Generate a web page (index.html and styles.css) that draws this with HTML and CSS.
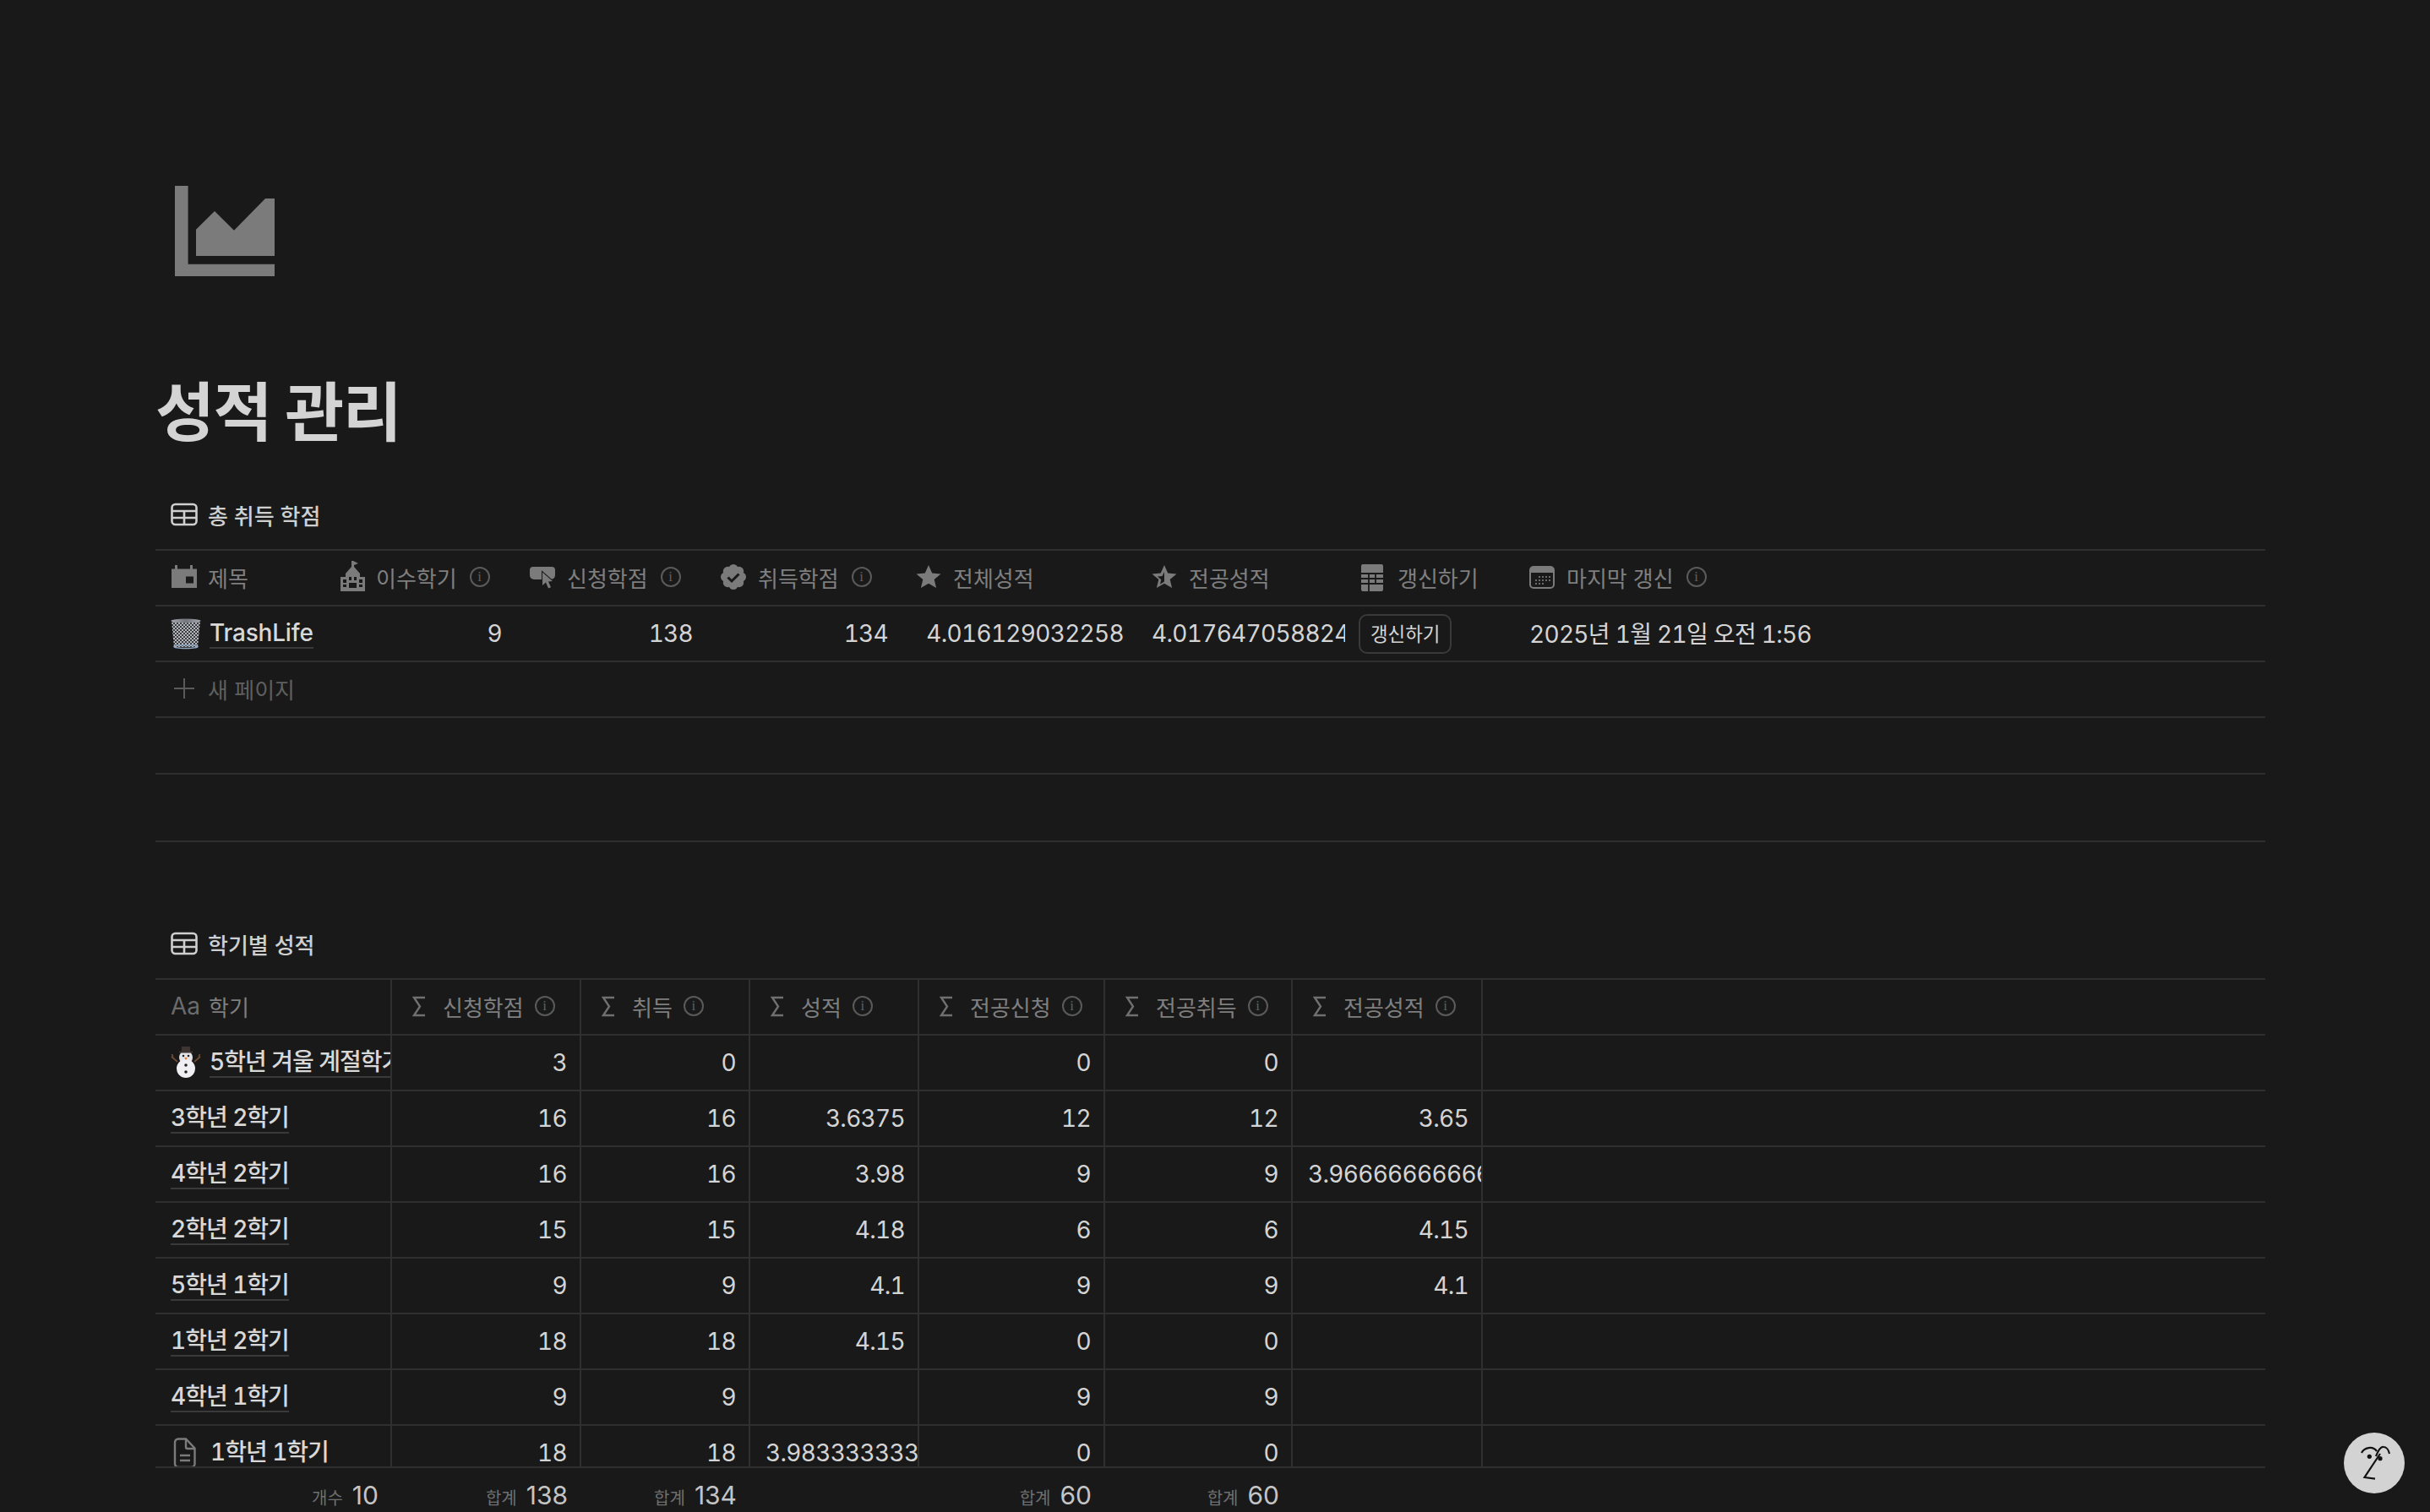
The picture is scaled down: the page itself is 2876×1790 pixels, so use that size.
FILE: index.html
```html
<!DOCTYPE html>
<html lang="ko">
	<head>
		<meta charset="utf-8" />
		<title>성적 관리</title>
		<link rel="stylesheet" href="styles.css">
	</head>
	<body>
		<div id="page">
			<svg class="page-icon" viewBox="0 0 118 107"><path d="M0 0h15.600v92.700H118V107H0z" fill="#7b7b7b"/><path d="M25 51.700 47 30 70 52.700 107 15h11v68H25z" fill="#7b7b7b"/></svg>
			<h1 class="page-title">성적 관리</h1>

			<div class="db-title">
				<svg class="db-icon" viewBox="0 0 32 32"><rect x="1.500" y="4" width="29" height="24" rx="4" fill="none" stroke="currentColor" stroke-width="2.600"/><path d="M1.500 12h29M1.500 20h29M16 12v16" fill="none" stroke="currentColor" stroke-width="2.600"/></svg>
				<span>총 취득 학점</span>
			</div>
			<div class="table summary">
				<div class="row head">
					<div class="cell"><svg class="ico" viewBox="0 0 30 30"><path d="M1 5.500h4V1h3v4.500h15V1h3v4.500h5V28H1zM18 14.500v8h9v-8z" fill="#7b7b7b" fill-rule="evenodd"/></svg><span>제목</span></div>
					<div class="cell"><svg class="ico" viewBox="0 0 30 30"><path d="M15 -4h2l6 3-5 2v2l7 8v4h6v17H2V15h6v-4l7-8zM5 18v4h4v-4zM5 24v3h4v-3zM24 18v4h4v-4zM24 24v3h4v-3zM12 15v4h3v-4zM18 15v4h3v-4zM12 22v6h9v-6z" fill="#7b7b7b" fill-rule="evenodd"/></svg><span>이수학기</span><i class="info">i</i></div>
					<div class="cell"><svg class="ico" viewBox="0 0 30 30"><path d="M4 3h22a4 4 0 0 1 4 4v6a5 5 0 0 1-5 5H5a5 5 0 0 1-5-5V7a4 4 0 0 1 4-4z" fill="#7b7b7b"/><path d="M15 9.500V25l4-3.500 3 7 3-1.200-3-6.800 5-.5z" fill="#7b7b7b" stroke="#191919" stroke-width="2" paint-order="stroke"/></svg><span>신청학점</span><i class="info">i</i></div>
					<div class="cell"><svg class="ico" viewBox="0 0 30 30"><g fill="#7b7b7b"><circle cx="15" cy="15" r="11"/><circle cx="15" cy="5.500" r="5.500"/><circle cx="15" cy="24.500" r="5.500"/><circle cx="5.500" cy="15" r="5.500"/><circle cx="24.500" cy="15" r="5.500"/><circle cx="8.300" cy="8.300" r="5.500"/><circle cx="21.700" cy="8.300" r="5.500"/><circle cx="8.300" cy="21.700" r="5.500"/><circle cx="21.700" cy="21.700" r="5.500"/></g><path d="M8.500 15.500l4.500 4.500 8.500-8.500" fill="none" stroke="#191919" stroke-width="3"/></svg><span>취득학점</span><i class="info">i</i></div>
					<div class="cell"><svg class="ico" viewBox="0 0 30 30"><path d="M15 1l4.200 9.500 10.300.9-7.800 6.700 2.400 10L15 22.700l-9.100 5.400 2.400-10L.5 11.400l10.300-.9z" fill="#7b7b7b"/></svg><span>전체성적</span></div>
					<div class="cell"><svg class="ico" viewBox="0 0 30 30"><path d="M15 1l4.200 9.500 10.300.9-7.800 6.700 2.400 10L15 22.700l-9.100 5.400 2.400-10L.5 11.400l10.300-.9zM15 9l-2.400 5-5.600.5 4.300 3.700-1.300 5.500L15 20.500z" fill="#7b7b7b" fill-rule="evenodd"/></svg><span>전공성적</span></div>
					<div class="cell"><svg class="ico" viewBox="0 0 30 30"><path d="M3 0h22a2 2 0 0 1 2 2v28a2 2 0 0 1-2 2H3a2 2 0 0 1-2-2V2a2 2 0 0 1 2-2z" fill="#7b7b7b"/><path d="M1 11h26M1 17h26M1 23h26M10 11v21M18 11v12" stroke="#191919" stroke-width="1.800"/></svg><span>갱신하기</span></div>
					<div class="cell"><svg class="ico" viewBox="0 0 30 30"><rect x="1" y="3" width="28" height="25" rx="4" fill="none" stroke="#7b7b7b" stroke-width="2"/><path d="M5 3h20a4 4 0 0 1 4 4v3H1V7a4 4 0 0 1 4-4z" fill="#7b7b7b"/><path d="M11 14h2v2h-2zM15 14h2v2h-2zM19 14h2v2h-2zM23 14h2v2h-2zM7 18h2v2H7zM11 18h2v2h-2zM15 18h2v2h-2zM19 18h2v2h-2zM23 18h2v2h-2zM7 22h2v2H7zM11 22h2v2h-2zM15 22h2v2h-2z" fill="#6a6a6a"/></svg><span>마지막 갱신</span><i class="info">i</i></div>
				</div>
				<div class="row">
					<div class="cell name">
						<svg class="emoji" viewBox="0 0 36 36"><defs><linearGradient id="bin" x1="0" x2="1" y1="0" y2="0"><stop offset="0" stop-color="#a4a9b0"/><stop offset=".5" stop-color="#74777d"/><stop offset="1" stop-color="#a4a9b0"/></linearGradient><pattern id="mesh" width="4" height="4" patternUnits="userSpaceOnUse"><path d="M0 0l4 4M4 0L0 4" stroke="#b4b7bb" stroke-width="1"/></pattern></defs><path d="M1 3h34l-3 31H4z" fill="#3a3c40"/><path d="M1 3h34l-3 31H4z" fill="url(#mesh)"/><ellipse cx="18" cy="3" rx="17.500" ry="2.500" fill="url(#bin)"/><ellipse cx="18" cy="33.500" rx="14" ry="2" fill="none" stroke="#8fa6c0" stroke-width="1.500"/></svg>
						<a class="link latin">TrashLife</a>
					</div>
					<div class="cell num">9</div>
					<div class="cell num">138</div>
					<div class="cell num">134</div>
					<div class="cell num">4.016129032258</div>
					<div class="cell clip">4.01764705882403</div>
					<div class="cell"><span class="btn">갱신하기</span></div>
					<div class="cell plain">2025년 1월 21일 오전 1:56</div>
				</div>
				<div class="row new">
					<div class="new-page"><svg class="plus" viewBox="0 0 24 24"><path d="M12 0v24M0 12h24" stroke="#5a5a5a" stroke-width="2"/></svg><span>새 페이지</span></div>
				</div>
				<div class="row calc"></div>
				<div class="row tail"></div>
			</div>

			<div class="db-title">
				<svg class="db-icon" viewBox="0 0 32 32"><rect x="1.500" y="4" width="29" height="24" rx="4" fill="none" stroke="currentColor" stroke-width="2.600"/><path d="M1.500 12h29M1.500 20h29M16 12v16" fill="none" stroke="currentColor" stroke-width="2.600"/></svg>
				<span>학기별 성적</span>
			</div>
			<div class="table terms">
				<div class="rows">
					<div class="row head">
						<div class="cell"><span class="aa">Aa</span><span>학기</span></div>
						<div class="cell"><svg class="sum" viewBox="0 0 16 25"><path d="M15 2H2l7 10.500L2 23h13" fill="none" stroke="#707070" stroke-width="2.400"/></svg><span>신청학점</span><i class="info">i</i></div>
						<div class="cell"><svg class="sum" viewBox="0 0 16 25"><path d="M15 2H2l7 10.500L2 23h13" fill="none" stroke="#707070" stroke-width="2.400"/></svg><span>취득</span><i class="info">i</i></div>
						<div class="cell"><svg class="sum" viewBox="0 0 16 25"><path d="M15 2H2l7 10.500L2 23h13" fill="none" stroke="#707070" stroke-width="2.400"/></svg><span>성적</span><i class="info">i</i></div>
						<div class="cell"><svg class="sum" viewBox="0 0 16 25"><path d="M15 2H2l7 10.500L2 23h13" fill="none" stroke="#707070" stroke-width="2.400"/></svg><span>전공신청</span><i class="info">i</i></div>
						<div class="cell"><svg class="sum" viewBox="0 0 16 25"><path d="M15 2H2l7 10.500L2 23h13" fill="none" stroke="#707070" stroke-width="2.400"/></svg><span>전공취득</span><i class="info">i</i></div>
						<div class="cell"><svg class="sum" viewBox="0 0 16 25"><path d="M15 2H2l7 10.500L2 23h13" fill="none" stroke="#707070" stroke-width="2.400"/></svg><span>전공성적</span><i class="info">i</i></div>
					</div>
					<div class="row">
						<div class="cell name">
							<svg class="emoji" viewBox="0 0 36 36"><path d="M8 17 1 11M28 17l7-6M3 13 1.500 8M33 13l1.500-5" stroke="#6e4a35" stroke-width="1.800"/><circle cx="18" cy="12" r="8" fill="#e4e4e8"/><circle cx="18" cy="25" r="11" fill="#f0f0f4"/><path d="M13 -1h10v6H13z" fill="#3f3634"/><path d="M10 5.500h16" stroke="#3f3634" stroke-width="2"/><circle cx="15" cy="10" r="1.300" fill="#222"/><circle cx="21" cy="10" r="1.300" fill="#222"/><path d="M16.300 12h3.400l-1.700 3z" fill="#e07020"/><circle cx="18" cy="21" r="1.800" fill="#222"/><circle cx="18" cy="29" r="1.800" fill="#222"/></svg>
							<a class="link">5학년 겨울 계절학기</a>
						</div>
						<div class="cell num">3</div><div class="cell num">0</div><div class="cell num"></div><div class="cell num">0</div><div class="cell num">0</div><div class="cell num"></div>
					</div>
					<div class="row">
						<div class="cell name"><a class="link">3학년 2학기</a></div>
						<div class="cell num">16</div><div class="cell num">16</div><div class="cell num">3.6375</div><div class="cell num">12</div><div class="cell num">12</div><div class="cell num">3.65</div>
					</div>
					<div class="row">
						<div class="cell name"><a class="link">4학년 2학기</a></div>
						<div class="cell num">16</div><div class="cell num">16</div><div class="cell num">3.98</div><div class="cell num">9</div><div class="cell num">9</div><div class="cell clip">3.96666666666667</div>
					</div>
					<div class="row">
						<div class="cell name"><a class="link">2학년 2학기</a></div>
						<div class="cell num">15</div><div class="cell num">15</div><div class="cell num">4.18</div><div class="cell num">6</div><div class="cell num">6</div><div class="cell num">4.15</div>
					</div>
					<div class="row">
						<div class="cell name"><a class="link">5학년 1학기</a></div>
						<div class="cell num">9</div><div class="cell num">9</div><div class="cell num">4.1</div><div class="cell num">9</div><div class="cell num">9</div><div class="cell num">4.1</div>
					</div>
					<div class="row">
						<div class="cell name"><a class="link">1학년 2학기</a></div>
						<div class="cell num">18</div><div class="cell num">18</div><div class="cell num">4.15</div><div class="cell num">0</div><div class="cell num">0</div><div class="cell num"></div>
					</div>
					<div class="row">
						<div class="cell name"><a class="link">4학년 1학기</a></div>
						<div class="cell num">9</div><div class="cell num">9</div><div class="cell num"></div><div class="cell num">9</div><div class="cell num">9</div><div class="cell num"></div>
					</div>
					<div class="row">
						<div class="cell name">
							<svg class="doc" viewBox="0 0 26 36"><path d="M5 1.500h9l10.500 11V31a4 4 0 0 1-4 4H5a4 4 0 0 1-4-4V5.500a4 4 0 0 1 4-4z" fill="none" stroke="#7b7b7b" stroke-width="2.400"/><path d="M14 2v9a2 2 0 0 0 2 2h8M7 21h12M7 27h12" fill="none" stroke="#7b7b7b" stroke-width="2.400"/></svg>
							<a class="link">1학년 1학기</a>
						</div>
						<div class="cell num">18</div><div class="cell num">18</div><div class="cell clip">3.98333333333333</div><div class="cell num">0</div><div class="cell num">0</div><div class="cell num"></div>
					</div>
				</div>
				<div class="footer">
					<div class="total"><small>개수</small>10</div>
					<div class="total"><small>합계</small>138</div>
					<div class="total"><small>합계</small>134</div>
					<div class="total"></div>
					<div class="total"><small>합계</small>60</div>
					<div class="total"><small>합계</small>60</div>
				</div>
			</div>
		</div>
		<div class="helper">
			<svg viewBox="0 0 72 72"><circle cx="36" cy="36" r="36" fill="#d3d3d3"/><path d="M21 24c3-6 13-9 18-2M38 28c2-5 5-12 9-11 3 0 6 3 7 8M43 25 24.500 53 37 54.700" fill="none" stroke="#111" stroke-width="2.200"/><circle cx="30.300" cy="28.300" r="2.600" fill="#111"/><circle cx="43" cy="30.700" r="2.600" fill="#111"/></svg>
		</div>
	</body>
</html>
```

FILE: styles.css
```css
* { box-sizing: border-box; }
html, body {
	margin: 0; padding: 0;
	height: 1790px;
	overflow: hidden;
	background-color: #191919;
}
body {
	color: #d4d4d4;
	font: 28px Inter, "Noto Sans CJK KR", sans-serif;
}
#page {
	width: 2681px;
	padding: 220px 0 0 184px;
}
svg { display: block; flex: none; overflow: visible; }
.page-icon {
	width: 118px; height: 107px;
	margin-left: 23px;
}
.page-title {
	margin: 113px 0 0 0;
	height: 96px;
	color: #d4d4d4;
	font-size: 76px; font-weight: 700; line-height: 96px;
	letter-spacing: -1.500px;
}
.db-title {
	display: flex; align-items: center; gap: 12px;
	height: 40px;
	margin-top: 54px; padding: 0 0 2px 18px;
	font-size: 26px; font-weight: 500;
	color: #cfcfcf;
}
.table + .db-title { margin-top: 101px; }
.db-icon { width: 32px; height: 32px; }

.table { border-top: 2px solid #2f2f2f; margin-top: 20px; }
.row {
	display: grid;
	height: 66px;
	border-bottom: 2px solid #2f2f2f;
}
.summary .row { grid-template-columns: 199px 226px 226px 231px 279px 247px 200px 1fr; }
.summary .row.new, .summary .row.calc { display: flex; }
.summary .row.calc { height: 67px; }
.summary .row.tail { height: 80px; }
.terms .rows { height: 578px; overflow: hidden; border-bottom: 2px solid #2f2f2f; }
.terms .row, .footer { grid-template-columns: 280px 224px 200px 200px 220px 222px 225px 1fr; }
.terms .cell { border-right: 2px solid #2f2f2f; }
.cell {
	display: flex; align-items: center;
	min-width: 0;
	padding: 0 15px 0 18px;
	overflow: hidden;
	white-space: nowrap;
	font-variant-numeric: tabular-nums;
	letter-spacing: -.7px;
}
.head .cell {
	gap: 14px;
	padding-bottom: 2px;
	color: #7f7f7f;
	font-size: 26px;
	letter-spacing: 0;
}
.terms .head .cell:nth-child(n+2) { padding-left: 24px; }
.ico { width: 30px; height: 30px; }
.info {
	display: inline-block;
	width: 24px; height: 24px;
	margin-left: -1px;
	border: 2px solid #5a5a5a; border-radius: 50%;
	color: #5f5f5f;
	font: normal 17px/20px "Liberation Serif", serif;
	text-align: center;
}
.summary .info { margin-left: 1px; }
.aa { font-size: 28px; color: #6b6b6b; margin-right: -4px; }
.sum { width: 16px; height: 25px; margin-right: 6px; }
.num { justify-content: flex-end; }
.plain { padding-bottom: 2px; }
.name { gap: 10px; }
.link {
	font-weight: 500;
	color: #d8d8d8;
	border-bottom: 2px solid #3a3a3a;
	line-height: 34px;
	letter-spacing: -1px;
}
.link.latin { letter-spacing: -.2px; }
.emoji { width: 36px; height: 36px; }
.doc { width: 26px; height: 36px; margin: 0 7px 0 4px; }
.btn {
	margin-left: -2px; padding: 0 12px;
	height: 47px; line-height: 43px;
	border: 2px solid #3a3a3a; border-radius: 10px;
	font-size: 22.400px;
	letter-spacing: 0;
}
.new-page {
	display: flex; align-items: center; gap: 16px;
	padding: 0 0 2px 22px;
	color: #5f5f5f;
	font-size: 26px;
}
.plus { width: 24px; height: 24px; }
.footer {
	display: grid;
	height: 50px;
}
.total {
	display: flex; align-items: baseline; justify-content: flex-end; gap: 11px;
	padding: 14px 16px 0 0;
	color: #c4c4c4;
	font-size: 30px;
}
.total small { color: #6f6f6f; font-size: 20px; }
.helper {
	position: absolute;
	right: 30px; bottom: 22px;
}
.helper svg { width: 72px; height: 72px; }
```
